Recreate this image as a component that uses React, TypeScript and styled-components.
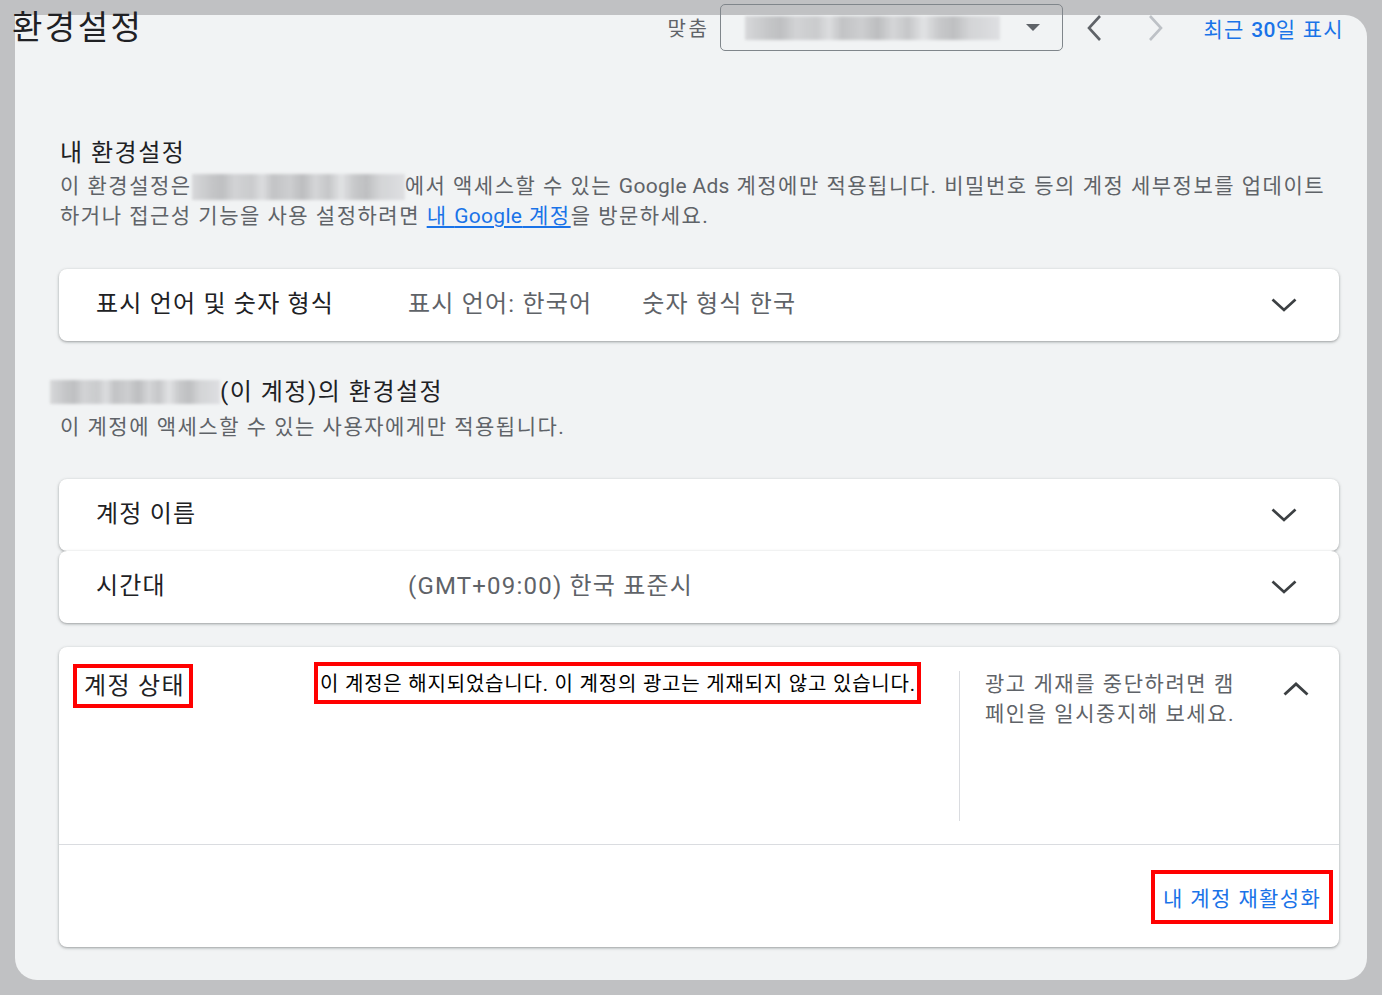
import React from "react";
import styled, { createGlobalStyle } from "styled-components";

const GlobalStyle = createGlobalStyle`
  html, body { margin: 0; padding: 0; }
  body {
    background: #c0c1c3;
    font-family: Roboto, "Noto Sans CJK KR", "Noto Sans", sans-serif;
    color: #202124;
  }
  * { box-sizing: border-box; }
`;

const Page = styled.div`
  width: 1382px;
  height: 995px;
  padding: 15px 0 0 15px;
  overflow: hidden;
`;

const Panel = styled.div`
  width: 1352px;
  height: 965px;
  background: #f1f3f4;
  border-radius: 0 22px 22px 22px;
  padding: 0 28px 33px 44px;
  display: flex;
  flex-direction: column;
`;

const Header = styled.header`
  display: flex;
  align-items: center;
  height: 47px;
  margin: -11px -5px 0 -47px;
`;

const PageTitle = styled.h1`
  margin: 0 auto 0 0;
  font-size: 33px;
  line-height: 40px;
  font-weight: 400;
  color: #202124;
  letter-spacing: 2.5px;
`;

const FitLabel = styled.span`
  font-size: 20px;
  color: #5f6368;
  margin-right: 11px;
  letter-spacing: 2.5px;
`;

const Select = styled.div`
  width: 343px;
  height: 47px;
  border: 1px solid #80868b;
  border-radius: 5px;
  display: flex;
  align-items: center;
  padding: 0 22px 0 24px;
`;

const Redacted = styled.div<{ $w: number; $h: number }>`
  width: ${(p) => p.$w}px;
  height: ${(p) => p.$h}px;
  flex-shrink: 0;
  display: inline-block;
  vertical-align: middle;
  background:
    linear-gradient(
      90deg,
      #d4d5d7 0%, #c3c4c6 8%, #b9babc 14%, #cfd0d2 20%, #c6c7c9 28%,
      #dadbdd 33%, #bebfc1 38%, #c9cacc 46%, #b7b8ba 52%, #d2d3d5 58%,
      #c1c2c4 64%, #e0e1e3 70%, #c4c5c7 76%, #b9babc 82%, #d0d1d3 88%, #dcdde0 100%
    );
  filter: blur(1.5px);
  opacity: 0.9;
`;

const Caret = styled.span`
  margin-left: auto;
  width: 0;
  height: 0;
  border-left: 7px solid transparent;
  border-right: 7px solid transparent;
  border-top: 7px solid #5f6368;
`;

const NavButton = styled.button<{ $ml: number }>`
  background: none;
  border: none;
  padding: 0;
  margin-left: ${(p) => p.$ml}px;
  display: flex;
  align-items: center;
  cursor: pointer;
`;

const RangeLink = styled.a`
  margin-left: 38px;
  font-size: 21px;
  color: #1a73e8;
  text-decoration: none;
  letter-spacing: 1.3px;
  b { font-weight: 500; letter-spacing: 0.3px; }
`;

const SectionTitle = styled.h2<{ $mt: number; $ml?: number }>`
  margin: ${(p) => p.$mt}px 0 0 ${(p) => p.$ml ?? 1}px;
  font-size: 24px;
  line-height: 32px;
  font-weight: 400;
  color: #202124;
  display: flex;
  align-items: center;
  letter-spacing: 1.5px;
`;

const SectionDesc = styled.p<{ $mt: number }>`
  margin: ${(p) => p.$mt}px 0 0 1px;
  font-size: 21px;
  line-height: 30px;
  color: #5f6368;
  letter-spacing: 1.5px;
  a {
    color: #1a73e8;
    text-decoration: underline;
    text-underline-offset: 3px;
  }
`;

const Latin = styled.span`
  letter-spacing: 0.3px;
`;

const Card = styled.div<{ $mt?: number }>`
  margin-top: ${(p) => p.$mt ?? 0}px;
  background: #fff;
  border-radius: 8px;
  box-shadow: 0 1px 2px rgba(60, 64, 67, 0.3), 0 1px 3px 1px rgba(60, 64, 67, 0.15);
`;

const RowCard = styled(Card)`
  height: 72px;
  display: flex;
  align-items: center;
  padding: 0 42px 8px 37px;
`;

const RowTitle = styled.div`
  width: 312px;
  font-size: 24px;
  color: #202124;
  letter-spacing: 1.2px;
`;

const RowValue = styled.div`
  font-size: 24px;
  color: #5f6368;
  margin-right: 50px;
  letter-spacing: 1.2px;
`;

const ChevronBox = styled.span`
  margin: 8px 0 0 auto;
  display: flex;
`;

const CardGroup = styled.div`
  margin-top: 37px;
  display: flex;
  flex-direction: column;
`;

const StatusCard = styled(Card)`
  height: 300px;
  display: flex;
  flex-direction: column;
`;

const StatusBody = styled.div`
  height: 198px;
  display: flex;
  align-items: flex-start;
  border-bottom: 1px solid #dadce0;
`;

const RedBox = styled.div`
  border: 4px solid #ff0000;
`;

const StatusLabel = styled(RedBox)`
  margin: 17px 0 0 14px;
  height: 44px;
  width: 120px;
  padding-left: 7px;
  font-size: 24px;
  line-height: 36px;
  color: #202124;
  letter-spacing: 1.3px;
  white-space: nowrap;
`;

const StatusMessage = styled(RedBox)`
  margin: 15px 0 0 121px;
  height: 42px;
  width: 607px;
  padding: 3px 0 0 2px;
  font-size: 20px;
  line-height: 31px;
  color: #000;
  white-space: nowrap;
  letter-spacing: 0.8px;
`;

const VDivider = styled.div`
  margin: 24px 0 0 38px;
  width: 1px;
  height: 150px;
  background: #dadce0;
`;

const Hint = styled.div`
  margin: 22px 0 0 25px;
  width: 262px;
  font-size: 21px;
  line-height: 30px;
  color: #5f6368;
  letter-spacing: 1.55px;
`;

const ChevronUpBox = styled.span`
  margin: 35px 30px 0 auto;
  display: flex;
`;

const StatusFooter = styled.div`
  flex: 1;
  display: flex;
  justify-content: flex-end;
  align-items: flex-start;
  padding: 25px 6px 0 0;
`;

const ReactivateButton = styled(RedBox)`
  height: 54px;
  width: 182px;
  padding-left: 8px;
  display: flex;
  align-items: center;
  font-size: 21px;
  color: #1a73e8;
  background: #fff;
  letter-spacing: 1.4px;
  white-space: nowrap;
  cursor: pointer;
`;

const ChevronDown = () => (
  <svg width="26" height="14" viewBox="0 0 26 14">
    <polyline points="1.5,1.5 13,12 24.5,1.5" fill="none" stroke="#3c4043" strokeWidth="2.7" />
  </svg>
);

const ChevronUp = () => (
  <svg width="26" height="14" viewBox="0 0 26 14">
    <polyline points="1.5,12.5 13,2 24.5,12.5" fill="none" stroke="#3c4043" strokeWidth="2.9" />
  </svg>
);

const ChevronSide = ({ dir, color }: { dir: "left" | "right"; color: string }) => (
  <svg width="20" height="28" viewBox="0 0 20 28">
    <polyline
      points={dir === "left" ? "15,2 4,14 15,26" : "5,2 16,14 5,26"}
      fill="none"
      stroke={color}
      strokeWidth="2.6"
    />
  </svg>
);

export default function App() {
  return (
    <>
      <GlobalStyle />
      <Page>
        <Panel>
          <Header>
            <PageTitle>환경설정</PageTitle>
            <FitLabel>맞춤</FitLabel>
            <Select>
              <Redacted $w={255} $h={24} />
              <Caret />
            </Select>
            <NavButton $ml={22} aria-label="이전">
              <ChevronSide dir="left" color="#5f6368" />
            </NavButton>
            <NavButton $ml={40} aria-label="다음">
              <ChevronSide dir="right" color="#bdc1c6" />
            </NavButton>
            <RangeLink>
              최근 <b>30</b>일 표시
            </RangeLink>
          </Header>

          <SectionTitle $mt={86}>내 환경설정</SectionTitle>
          <SectionDesc $mt={2}>
            이 환경설정은
            <Redacted $w={213} $h={26} />
            에서 액세스할 수 있는 <Latin>Google Ads</Latin> 계정에만 적용됩니다. 비밀번호 등의 계정 세부정보를 업데이트
            <br />
            하거나 접근성 기능을 사용 설정하려면 <a>내 <Latin>Google</Latin> 계정</a>을 방문하세요.
          </SectionDesc>

          <RowCard $mt={38}>
            <RowTitle>표시 언어 및 숫자 형식</RowTitle>
            <RowValue>표시 언어: 한국어</RowValue>
            <RowValue>숫자 형식 한국</RowValue>
            <ChevronBox>
              <ChevronDown />
            </ChevronBox>
          </RowCard>

          <SectionTitle $mt={35} $ml={-9}>
            <Redacted $w={170} $h={24} />
            (이 계정)의 환경설정
          </SectionTitle>
          <SectionDesc $mt={4}>이 계정에 액세스할 수 있는 사용자에게만 적용됩니다.</SectionDesc>

          <CardGroup>
            <RowCard>
              <RowTitle>계정 이름</RowTitle>
              <ChevronBox>
                <ChevronDown />
              </ChevronBox>
            </RowCard>
            <RowCard>
              <RowTitle>시간대</RowTitle>
              <RowValue>(GMT+09:00) 한국 표준시</RowValue>
              <ChevronBox>
                <ChevronDown />
              </ChevronBox>
            </RowCard>
          </CardGroup>

          <StatusCard $mt={24}>
            <StatusBody>
              <StatusLabel>계정 상태</StatusLabel>
              <StatusMessage>이 계정은 해지되었습니다. 이 계정의 광고는 게재되지 않고 있습니다.</StatusMessage>
              <VDivider />
              <Hint>광고 게재를 중단하려면 캠페인을 일시중지해 보세요.</Hint>
              <ChevronUpBox>
                <ChevronUp />
              </ChevronUpBox>
            </StatusBody>
            <StatusFooter>
              <ReactivateButton>내 계정 재활성화</ReactivateButton>
            </StatusFooter>
          </StatusCard>
        </Panel>
      </Page>
    </>
  );
}
